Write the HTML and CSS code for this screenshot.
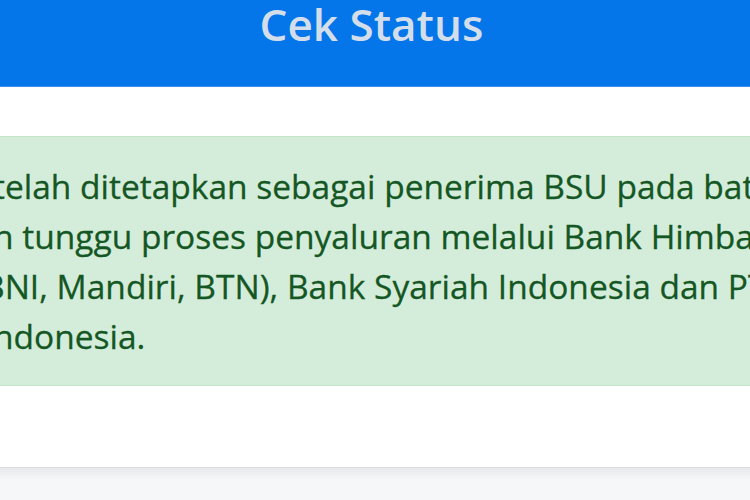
FILE: index.html
```html
<!DOCTYPE html>
<html lang="id">
<head>
<meta charset="utf-8">
<title>Cek Status</title>
<link rel="stylesheet" href="styles.css">
</head>
<body>
<header class="topbar">
  <h1 class="title">Cek Status</h1>
</header>
<main class="content">
  <div class="alert" role="alert">
    <div class="line"><span class="cut">Anda </span>telah ditetapkan sebagai penerima BSU pada batch 2.</div>
    <div class="line"><span class="cut">Silaka</span>n tunggu proses penyaluran melalui Bank Himbara</div>
    <div class="line line-shift"><span class="cut">(BRI, </span>BNI, Mandiri, BTN), Bank Syariah Indonesia dan PT Pos</div>
    <div class="line"><span class="cut">I</span>ndonesia.</div>
  </div>
</main>
<footer class="footer"></footer>
</body>
</html>
```
FILE: styles.css
```css
html, body {
  margin: 0;
  padding: 0;
  overflow: hidden;
  background: #ffffff;
  font-family: "Open Sans", "Noto Sans", sans-serif;
}
body {
  width: 750px;
  height: 500px;
  display: flex;
  flex-direction: column;
}
.topbar {
  height: 86px;
  background: #0576ea;
  border-bottom: 1px solid #3a8ff0;
  display: flex;
  justify-content: center;
  align-items: flex-start;
}
.title {
  margin: 0 7px 0 0;
  font-size: 44px;
  font-weight: 600;
  line-height: 48px;
  color: #d4deeb;
}
.content {
  flex: 1;
  padding-top: 49px;
}
.alert {
  margin-left: -40px;
  width: 900px;
  box-sizing: border-box;
  padding: 24px 0 24px 32px;
  background: #d4edda;
  border: 1px solid #c3e6cb;
  color: #155724;
  font-size: 33.5px;
  line-height: 50px;
  -webkit-text-stroke: 0.3px #155724;
}
.line {
  white-space: nowrap;
}
.line-shift {
  margin-left: -10px;
}
.cut {
  display: inline-flex;
  width: 0;
  justify-content: flex-end;
  white-space: pre;
}
.footer {
  height: 32px;
  border-top: 1px solid #dadbdf;
  background: linear-gradient(#e8e9ec, #f6f7f9 12px);
}
```
